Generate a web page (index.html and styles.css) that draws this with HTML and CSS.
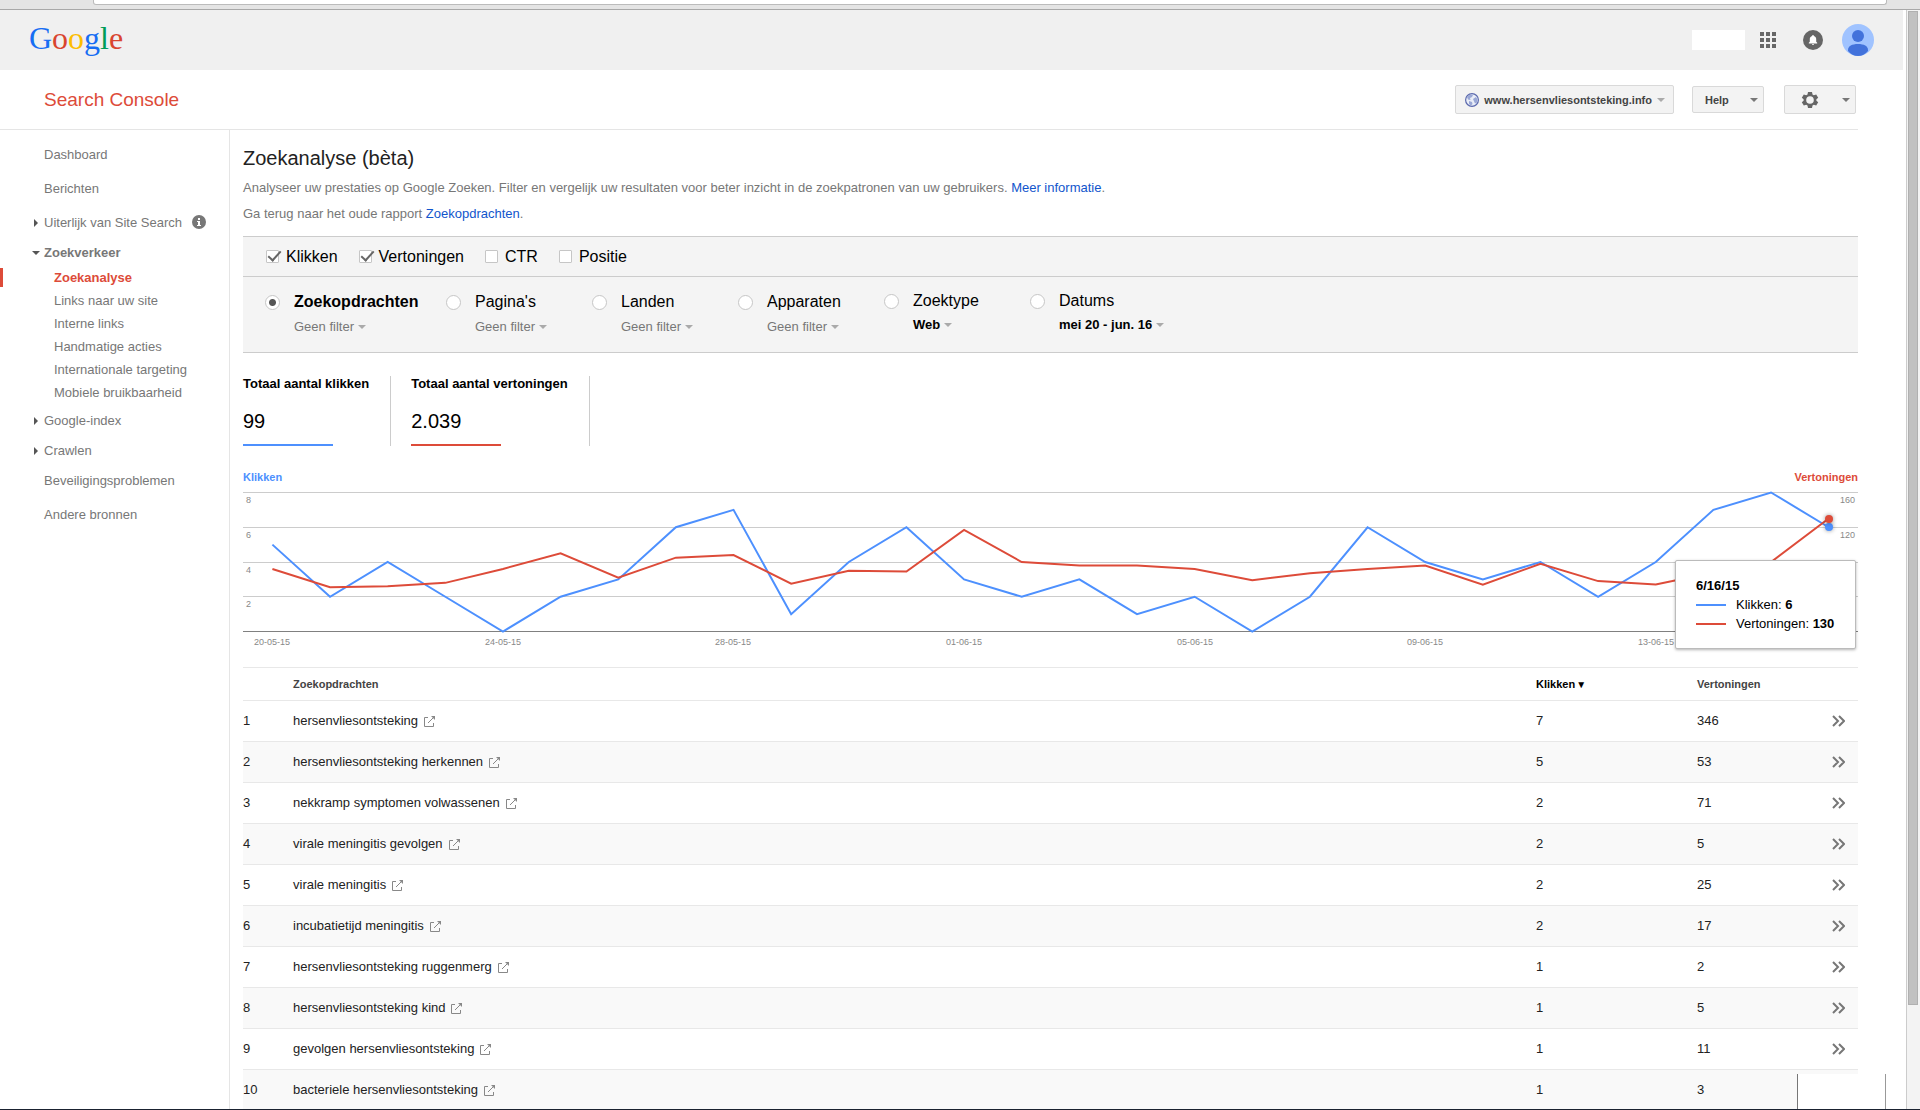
FILE: index.html
```html
<!DOCTYPE html>
<html lang="nl">
<head>
<meta charset="utf-8">
<title>Search Console - Zoekanalyse</title>
<link rel="stylesheet" href="styles.css">
</head>
<body>
<svg class="defs" aria-hidden="true">
  <symbol id="open" viewBox="0 0 11 11"><path d="M4 1.500H.5v9h9V7" fill="none" stroke="#888"/><path d="M4 7l5.500-5.500" fill="none" stroke="#888"/><path d="M7 0h4v4z" fill="#888"/></symbol>
  <symbol id="more" viewBox="0 0 13 12"><path d="M1 1l5 5-5 5M7 1l5 5-5 5" fill="none" stroke="#777" stroke-width="2"/></symbol>
</svg>
<div class="chrome"><div class="address"></div></div>
<div class="window">
  <div class="page">
    <header class="gbar">
      <a class="logo" href="#" aria-label="Google"><span class="b">G</span><span class="r">o</span><span class="y">o</span><span class="b">g</span><span class="g">l</span><span class="r">e</span></a>
      <div class="account">
        <span class="name"></span>
        <button class="icon-btn" aria-label="Apps"><svg width="16" height="16" fill="#666"><path d="M0 0h4v4H0zM6 0h4v4H6zM12 0h4v4h-4zM0 6h4v4H0zM6 6h4v4H6zM12 6h4v4h-4zM0 12h4v4H0zM6 12h4v4H6zM12 12h4v4h-4z"/></svg></button>
        <button class="icon-btn bell" aria-label="Meldingen"><svg width="20" height="20"><circle cx="10" cy="10" r="10" fill="#666"/><path d="M10 5c.6 0 .9.4.9 1 1.500.4 2.300 1.600 2.300 3.200v2.600l1 1v.7H5.800v-.7l1-1V9.200C6.800 7.600 7.600 6.400 9.100 6c0-.6.3-1 .9-1zM9 14h2c0 .6-.4.9-1 .9S9 14.600 9 14z" fill="#fff"/></svg></button>
        <button class="icon-btn" aria-label="Account"><svg width="32" height="32"><circle cx="16" cy="16" r="16" fill="#a0c3ff"/><circle cx="16" cy="12" r="6" fill="#4272db"/><path d="M6 27v-1c0-4 4-6 10-6s10 2 10 6v1q-4 5-10 5T6 27z" fill="#4272db"/></svg></button>
      </div>
    </header>
    <div class="titlebar">
      <a class="product" href="#">Search Console</a>
      <div class="tools">
        <button class="btn site"><svg width="14" height="14"><circle cx="7" cy="7" r="6.400" fill="#e9edf7" stroke="#5b69ad" stroke-width="1.200"/><path d="M2 4l3-2.500 3 .5-1 2-2 1 .5 2L3 6.500zM8 6l3-2 1.500 2.500-.5 3-2 1zM4 8l3 1 .5 2L6 12.500 4 11z" fill="#9aa8d6"/></svg>www.hersenvliesontsteking.info<i class="caret light"></i></button>
        <button class="btn help">Help<i class="caret"></i></button>
        <button class="btn gear" aria-label="Instellingen"><svg width="18" height="18" viewBox="0 0 18 18"><path fill="#666" fill-rule="evenodd" d="M7 1h4l.5 2.400 1.300.8L15.200 3.400l2 3.400L15.400 8.300v1.400l1.800 1.500-2 3.400-2.400-.8-1.300.8L11 17H7l-.5-2.400-1.300-.8-2.400.8-2-3.400 1.800-1.500V8.300L.8 6.800l2-3.400 2.400.8 1.300-.8zM9 5.200a3.800 3.800 0 1 0 0 7.600 3.800 3.800 0 0 0 0-7.600z"/></svg><i class="caret"></i></button>
      </div>
    </div>
    <div class="columns">
      <nav class="sidebar">
        <ul class="menu">
          <li><a href="#">Dashboard</a></li>
          <li><a href="#">Berichten</a></li>
          <li class="group closed"><a href="#">Uiterlijk van Site Search</a><svg class="info" width="14" height="14"><circle cx="7" cy="7" r="7" fill="#777"/><path d="M6 3h2v2H6zM5 6h3v4h1v1H5v-1h1V7H5z" fill="#fff"/></svg></li>
          <li class="group open"><a href="#"><b>Zoekverkeer</b></a>
            <ul class="submenu">
              <li class="active"><a href="#">Zoekanalyse</a></li>
              <li><a href="#">Links naar uw site</a></li>
              <li><a href="#">Interne links</a></li>
              <li><a href="#">Handmatige acties</a></li>
              <li><a href="#">Internationale targeting</a></li>
              <li><a href="#">Mobiele bruikbaarheid</a></li>
            </ul>
          </li>
          <li class="group closed"><a href="#">Google-index</a></li>
          <li class="group closed"><a href="#">Crawlen</a></li>
          <li><a href="#">Beveiligingsproblemen</a></li>
          <li><a href="#">Andere bronnen</a></li>
        </ul>
      </nav>
      <main class="main">
        <h1>Zoekanalyse (bèta)</h1>
        <p class="intro">Analyseer uw prestaties op Google Zoeken. Filter en vergelijk uw resultaten voor beter inzicht in de zoekpatronen van uw gebruikers. <a href="#">Meer informatie</a>.</p>
        <p class="intro">Ga terug naar het oude rapport <a href="#">Zoekopdrachten</a>.</p>
        <form class="filters">
          <div class="metrics">
            <label><input type="checkbox" checked>Klikken</label>
            <label><input type="checkbox" checked>Vertoningen</label>
            <label><input type="checkbox">CTR</label>
            <label><input type="checkbox">Positie</label>
          </div>
          <div class="dimensions">
            <div class="dim wide"><input type="radio" name="dim" id="d1" checked><div><label for="d1">Zoekopdrachten</label><button type="button">Geen filter<i class="caret small"></i></button></div></div>
            <div class="dim"><input type="radio" name="dim" id="d2"><div><label for="d2">Pagina's</label><button type="button">Geen filter<i class="caret small"></i></button></div></div>
            <div class="dim"><input type="radio" name="dim" id="d3"><div><label for="d3">Landen</label><button type="button">Geen filter<i class="caret small"></i></button></div></div>
            <div class="dim"><input type="radio" name="dim" id="d4"><div><label for="d4">Apparaten</label><button type="button">Geen filter<i class="caret small"></i></button></div></div>
            <div class="dim set"><input type="radio" name="dim" id="d5"><div><label for="d5">Zoektype</label><button type="button">Web<i class="caret small"></i></button></div></div>
            <div class="dim set"><input type="radio" name="dim" id="d6"><div><label for="d6">Datums</label><button type="button">mei 20 - jun. 16<i class="caret small"></i></button></div></div>
          </div>
        </form>
        <div class="totals">
          <div class="total clicks"><h2>Totaal aantal klikken</h2><p>99</p></div>
          <div class="total views"><h2>Totaal aantal vertoningen</h2><p>2.039</p></div>
        </div>
        <div class="axis-titles"><span class="c">Klikken</span><span class="v">Vertoningen</span></div>
        <div class="chart">
          <svg class="plot" viewBox="0 0 1615 160">
            <path class="grid" d="M0 2.500H1615M0 37.500H1615M0 72.500H1615M0 106.500H1615"/>
            <path class="base" d="M0 141.500H1615"/>
            <g class="ticks">
              <text x="3" y="13">8</text><text x="3" y="48">6</text><text x="3" y="83">4</text><text x="3" y="117">2</text>
              <text x="1612" y="13" class="end">160</text><text x="1612" y="48" class="end">120</text><text x="1612" y="83" class="end">80</text><text x="1612" y="117" class="end">40</text>
              <text x="29" y="155" class="mid">20-05-15</text><text x="260" y="155" class="mid">24-05-15</text><text x="490" y="155" class="mid">28-05-15</text><text x="721" y="155" class="mid">01-06-15</text><text x="952" y="155" class="mid">05-06-15</text><text x="1182" y="155" class="mid">09-06-15</text><text x="1413" y="155" class="mid">13-06-15</text>
            </g>
            <g transform="translate(29.400 141.500) scale(57.640 -17.375)">
              <polyline class="line c" points="0,5 1,2 2,4 3,2 4,0 5,2 6,3 7,6 8,7 9,1 10,4 11,6 12,3 13,2 14,3 15,1 16,2 17,0 18,2 19,6 20,4 21,3 22,4 23,2 24,4 25,7 26,8 27,6"/>
              <polyline class="line v" points="0,3.600 1,2.550 2,2.600 3,2.800 4,3.600 5,4.500 6,3.100 7,4.250 8,4.400 9,2.750 10,3.500 11,3.450 12,5.850 13,4 14,3.800 15,3.800 16,3.600 17,2.950 18,3.350 19,3.600 20,3.800 21,2.700 22,3.900 23,2.900 24,2.700 25,3.400 26,4 27,6.500"/>
            </g>
            <circle class="dot" cx="1586" cy="37" r="4" fill="#4d90fe"/>
            <circle class="dot" cx="1586" cy="29" r="4" fill="#dd4b39"/>
          </svg>
          <div class="tooltip">
            <b>6/16/15</b>
            <div class="c"><i></i>Klikken: <b>6</b></div>
            <div class="v"><i></i>Vertoningen: <b>130</b></div>
          </div>
        </div>
        <table class="queries">
          <thead><tr><th class="n"></th><th>Zoekopdrachten</th><th class="k">Klikken<span class="sort">▼</span></th><th class="w">Vertoningen</th><th class="m"></th></tr></thead>
          <tbody>
            <tr><td>1</td><td>hersenvliesontsteking<a href="#" aria-label="Openen"><svg><use href="#open"/></svg></a></td><td>7</td><td>346</td><td><a href="#" aria-label="Meer"><svg><use href="#more"/></svg></a></td></tr>
            <tr><td>2</td><td>hersenvliesontsteking herkennen<a href="#" aria-label="Openen"><svg><use href="#open"/></svg></a></td><td>5</td><td>53</td><td><a href="#" aria-label="Meer"><svg><use href="#more"/></svg></a></td></tr>
            <tr><td>3</td><td>nekkramp symptomen volwassenen<a href="#" aria-label="Openen"><svg><use href="#open"/></svg></a></td><td>2</td><td>71</td><td><a href="#" aria-label="Meer"><svg><use href="#more"/></svg></a></td></tr>
            <tr><td>4</td><td>virale meningitis gevolgen<a href="#" aria-label="Openen"><svg><use href="#open"/></svg></a></td><td>2</td><td>5</td><td><a href="#" aria-label="Meer"><svg><use href="#more"/></svg></a></td></tr>
            <tr><td>5</td><td>virale meningitis<a href="#" aria-label="Openen"><svg><use href="#open"/></svg></a></td><td>2</td><td>25</td><td><a href="#" aria-label="Meer"><svg><use href="#more"/></svg></a></td></tr>
            <tr><td>6</td><td>incubatietijd meningitis<a href="#" aria-label="Openen"><svg><use href="#open"/></svg></a></td><td>2</td><td>17</td><td><a href="#" aria-label="Meer"><svg><use href="#more"/></svg></a></td></tr>
            <tr><td>7</td><td>hersenvliesontsteking ruggenmerg<a href="#" aria-label="Openen"><svg><use href="#open"/></svg></a></td><td>1</td><td>2</td><td><a href="#" aria-label="Meer"><svg><use href="#more"/></svg></a></td></tr>
            <tr><td>8</td><td>hersenvliesontsteking kind<a href="#" aria-label="Openen"><svg><use href="#open"/></svg></a></td><td>1</td><td>5</td><td><a href="#" aria-label="Meer"><svg><use href="#more"/></svg></a></td></tr>
            <tr><td>9</td><td>gevolgen hersenvliesontsteking<a href="#" aria-label="Openen"><svg><use href="#open"/></svg></a></td><td>1</td><td>11</td><td><a href="#" aria-label="Meer"><svg><use href="#more"/></svg></a></td></tr>
            <tr><td>10</td><td>bacteriele hersenvliesontsteking<a href="#" aria-label="Openen"><svg><use href="#open"/></svg></a></td><td>1</td><td>3</td><td><a href="#" aria-label="Meer"><svg><use href="#more"/></svg></a></td></tr>
          </tbody>
        </table>
      </main>
    </div>
  </div>
  <div class="scrollbar"><div class="thumb"></div></div>
  <div class="popup"></div>
</div>
</body>
</html>
```
FILE: styles.css
```css
* { box-sizing: border-box; }
body {
  margin: 0;
  height: 100vh;
  display: flex;
  flex-direction: column;
  overflow: hidden;
  border-bottom: 1px solid #1a2230;
  font: 13px/16px "Liberation Sans", Arial, sans-serif;
  color: #222;
  background: #fff;
}
a { color: #15c; text-decoration: none; }
ul, h1, h2, p { margin: 0; padding: 0; list-style: none; font-weight: normal; }
button { font: inherit; color: inherit; background: none; border: 0; padding: 0; }
svg { display: block; }
.defs { position: absolute; width: 0; height: 0; }

.chrome { flex: none; height: 10px; padding: 0 33px 0 93px; background: #e4e4e4; border-bottom: 1px solid #a8a8a8; }
.address { height: 5px; background: #fff; border: 1px solid #bbb; border-top: 0; border-radius: 0 0 3px 3px; }
.window { flex: 1; min-height: 0; display: flex; position: relative; }
.page { flex: 1; min-width: 0; margin-right: 3px; overflow: hidden; display: flex; flex-direction: column; }
.scrollbar { flex: none; width: 14px; padding: 1px 2px 0 1px; border-left: 1px solid #ccc; background: #f3f3f3; }
.thumb { height: calc(100% - 104px); background: #c1c1c1; border: 1px solid #b0b0b0; }
.popup { position: absolute; right: 34px; bottom: 0; width: 89px; height: 35px; background: #fff; border-left: 1px solid #777; border-right: 1px solid #999; }

.gbar { flex: none; height: 60px; padding: 0 29px; display: flex; justify-content: space-between; align-items: center; background: #f0f0f0; }
.logo { margin-bottom: 4px; font: 32px/36px "Liberation Serif", serif; }
.b { color: #176df3; }
.r { color: #d9452f; }
.y { color: #fdbd00; }
.g { color: #009c57; }
.account { display: flex; align-items: center; }
.name { width: 53px; height: 20px; margin-right: 15px; background: #fff; }
.bell { margin: 0 19px 0 27px; }

.titlebar { flex: none; height: 60px; margin-right: 45px; padding: 0 2px 0 44px; display: flex; justify-content: space-between; align-items: center; border-bottom: 1px solid #e5e5e5; }
.product { color: #dd4b39; font-size: 19px; line-height: 24px; }
.tools { display: flex; align-items: center; }
.btn { height: 29px; border: 1px solid #d9d9d9; border-radius: 2px; background: #f3f3f3; display: flex; align-items: center; font-size: 11px; font-weight: bold; color: #444; }
.site { padding: 0 8px 0 9px; gap: 5px; }
.help { width: 72px; height: 27px; margin: 0 20px 0 18px; padding: 0 5px 0 12px; justify-content: space-between; }
.gear { width: 72px; padding: 0 5px 0 16px; justify-content: space-between; }
.caret { display: inline-block; border: 4px solid transparent; border-top-color: #777; border-bottom: 0; }
.light { border-top-color: #aaa; }
.small { margin-left: 4px; vertical-align: 2px; border-top-color: #aaa; }

.columns { flex: 1; min-height: 0; display: flex; }
.sidebar { flex: none; width: 230px; padding-top: 17px; border-right: 1px solid #e5e5e5; }
.menu a { color: #777; }
.menu > li { position: relative; padding-left: 44px; margin-bottom: 18px; }
.menu > .group { margin-bottom: 14px; }
.group::before { content: ""; position: absolute; left: 34px; top: 4px; border: 4px solid transparent; border-left-color: #555; border-right: 0; }
.menu > .open { margin-bottom: 12px; }
.open::before { left: 32px; top: 6px; border: 4px solid transparent; border-top-color: #555; border-bottom: 0; }
.info { display: inline-block; margin-left: 10px; vertical-align: -2px; }
.group { white-space: nowrap; }
.submenu { display: grid; gap: 7px; margin: 9px 0 0 -44px; }
.submenu li { position: relative; padding-left: 54px; }
.submenu .active a { color: #dd4b39; font-weight: bold; }
.active::before { content: ""; position: absolute; left: 0; top: -2px; width: 3px; height: 19px; background: #dd4b39; }

.main { flex: 1; min-width: 0; margin-right: 45px; padding: 16px 0 0 13px; }
h1 { font-size: 20px; line-height: 24px; margin-bottom: 10px; }
.intro { color: #777; margin-bottom: 10px; }
.filters { margin-top: 14px; border: 1px solid #ccc; border-width: 1px 0; background: #f4f4f4; color: #000; font-size: 16px; line-height: 20px; }
.metrics { height: 40px; padding-left: 23px; display: flex; align-items: center; gap: 21px; border-bottom: 1px solid #ccc; }
.metrics label { display: flex; align-items: center; gap: 7px; }
.filters input { appearance: none; margin: 0; flex: none; background: #fff; border: 1px solid #c6c6c6; position: relative; }
.metrics input { width: 13px; height: 13px; border-radius: 1px; }
.metrics input:checked::after { content: ""; position: absolute; left: 4px; top: -3px; width: 5px; height: 11px; border: solid #666; border-width: 0 2px 2px 0; transform: rotate(42deg); }
.dimensions { height: 75px; padding: 15px 0 0 22px; display: flex; }
.dim { display: flex; gap: 14px; width: 146px; white-space: nowrap; }
.wide { width: 181px; }
.dim > div { display: flex; flex-direction: column; align-items: flex-start; gap: 7px; }
.dim input { width: 15px; height: 15px; margin-top: 3px; border-radius: 50%; }
.dim input:checked { background: radial-gradient(circle, #555 3px, #fff 4px); }
.dim input:checked + div label { font-weight: bold; }
.dim button { font-size: 13px; line-height: 16px; color: #777; }
.set { margin-top: -1px; }
.set > div { gap: 6px; }
.dim.set button { color: #000; font-weight: bold; }

.totals { display: flex; margin-top: 23px; color: #000; }
.total { padding-right: 21px; border-right: 1px solid #ccc; }
.total + .total { padding-left: 20px; }
.total h2 { font-size: 13px; font-weight: bold; line-height: 16px; }
.total p { width: 90px; margin-top: 17px; padding-bottom: 11px; font-size: 20px; line-height: 24px; border-bottom: 2px solid #4d90fe; }
.views p { border-color: #dd4b39; }
.axis-titles { display: flex; justify-content: space-between; margin: 24px 0 6px; font-size: 11px; line-height: 14px; font-weight: bold; }
.axis-titles .c { color: #4d90fe; }
.axis-titles .v { color: #dd4b39; }
.chart { position: relative; margin-bottom: 17px; }
.plot { width: 100%; height: auto; overflow: visible; }
.grid { stroke: #ccc; }
.base { stroke: #808080; }
.ticks { font-size: 9px; fill: #888; }
.end { text-anchor: end; }
.mid { text-anchor: middle; }
.line { fill: none; stroke-width: 2px; vector-effect: non-scaling-stroke; }
.line.c { stroke: #4d90fe; }
.line.v { stroke: #dd4b39; }
.dot { filter: drop-shadow(0 0 2px rgba(0, 0, 0, .4)); }
.tooltip { position: absolute; right: 2px; top: 70px; width: 181px; padding: 15px 20px; border: 1px solid #bbb; border-radius: 2px; background: #fff; box-shadow: 0 1px 3px rgba(0, 0, 0, .3); line-height: 19px; color: #000; white-space: nowrap; }
.tooltip i { display: inline-block; width: 30px; height: 2px; margin-right: 10px; vertical-align: 3px; background: #4d90fe; }
.tooltip .v i { background: #dd4b39; }

.queries { width: 100%; table-layout: fixed; border-collapse: separate; border-spacing: 0; border-top: 1px solid #e8e8e8; }
.queries th, .queries td { padding: 0; text-align: left; border-bottom: 1px solid #e8e8e8; }
.queries th { height: 33px; padding-bottom: 1px; font-size: 11px; color: #444; }
.queries td { height: 41px; padding-bottom: 1px; }
.queries .n { width: 50px; }
.queries .k { width: 161px; color: #000; }
.queries .w { width: 120px; }
.queries .m { width: 41px; }
.sort { font-size: 10px; line-height: 10px; margin-left: 1px; }
tbody tr:nth-child(even) { background: #f9f9f9; }
td a { display: inline-block; margin-left: 6px; vertical-align: -2px; }
td svg { width: 11px; height: 11px; }
td:last-child a { margin-left: 15px; margin-top: 3px; }
td:last-child svg { width: 13px; height: 12px; }
```
